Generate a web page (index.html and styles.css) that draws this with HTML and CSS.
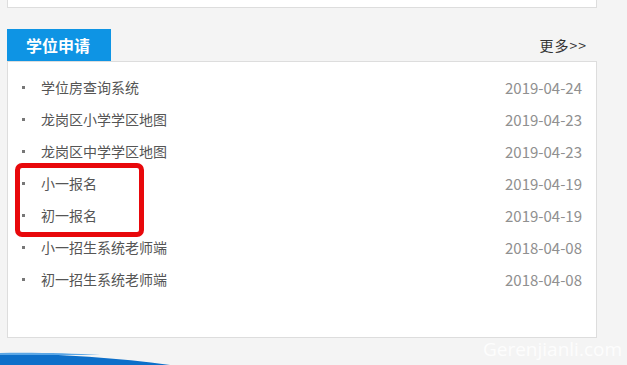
FILE: index.html
```html
<!DOCTYPE html>
<html lang="zh-CN">
<head>
    <meta charset="UTF-8">
    <title>学位申请</title>
    <link rel="stylesheet" href="styles.css">
</head>
<body>
    <div class="wrap">
        <div class="top-box"></div>

        <div class="section">
            <div class="section-head">
                <div class="tab">学位申请</div>
                <a class="more" href="#">更多&gt;&gt;</a>
            </div>
            <div class="panel">
                <ul class="news">
                    <li><span class="dot"></span><a href="#">学位房查询系统</a><span class="date">2019-04-24</span></li>
                    <li><span class="dot"></span><a href="#">龙岗区小学学区地图</a><span class="date">2019-04-23</span></li>
                    <li><span class="dot"></span><a href="#">龙岗区中学学区地图</a><span class="date">2019-04-23</span></li>
                    <li><span class="dot"></span><a href="#">小一报名</a><span class="date">2019-04-19</span></li>
                    <li><span class="dot"></span><a href="#">初一报名</a><span class="date">2019-04-19</span></li>
                    <li><span class="dot"></span><a href="#">小一招生系统老师端</a><span class="date">2018-04-08</span></li>
                    <li><span class="dot"></span><a href="#">初一招生系统老师端</a><span class="date">2018-04-08</span></li>
                </ul>
                <div class="mark"></div>
            </div>
        </div>
    </div>

    <div class="footer">
        <svg width="627" height="15" viewBox="0 0 627 15">
            <path d="M0 3 C60 4 120 8 170 15 L0 15 Z" fill="#0d6fc9"/>
            <path d="M0 3 C40 2.5 70 3.5 100 5 C70 5 40 5 0 5 Z" fill="#5aa6e6"/>
        </svg>
        <span class="watermark">Gerenjianli.com</span>
    </div>
</body>
</html>
```

FILE: styles.css
```css
body {
    margin: 0;
    background: #f4f4f4;
    font-family: "Noto Sans CJK SC", "Microsoft YaHei", sans-serif;
    width: 627px;
    height: 365px;
    overflow: hidden;
}
.wrap {
    width: 590px;
    margin-left: 7px;
}
.top-box {
    height: 7px;
    background: #fff;
    border: 1px solid #ddd;
    border-top: none;
}
.section {
    margin-top: 21px;
}
.section-head {
    display: flex;
    justify-content: space-between;
    align-items: center;
    height: 32px;
}
.tab {
    width: 85px;
    height: 32px;
    line-height: 32px;
    padding-left: 19px;
    background: #0e94e4;
    color: #fff;
    font-size: 16px;
    font-weight: bold;
}
.more {
    font-size: 14px;
    color: #333;
    text-decoration: none;
    padding-right: 10px;
    letter-spacing: 1px;
}
.panel {
    position: relative;
    height: 266px;
    background: #fff;
    border: 1px solid #ddd;
    padding: 9px 14px 0 14px;
}
.news {
    list-style: none;
    margin: 0;
    padding: 0;
}
.news li {
    display: flex;
    align-items: center;
    height: 32px;
    font-size: 14px;
}
.dot {
    width: 3px;
    height: 3px;
    background: #777;
    margin-right: 16px;
}
.news a {
    color: #555;
    text-decoration: none;
    flex: 1;
}
.date {
    color: #909090;
    font-size: 15px;
}
.mark {
    position: absolute;
    left: 7px;
    top: 101px;
    width: 119px;
    height: 64px;
    border: 5px solid #e8080b;
    border-radius: 7px;
}
.footer {
    position: relative;
    margin-top: 12px;
    height: 15px;
}
.footer svg {
    display: block;
}
.watermark {
    position: absolute;
    right: 5px;
    top: -14px;
    font-family: "Open Sans", sans-serif;
    font-size: 19px;
    color: rgba(255, 255, 255, 0.85);
}
```
